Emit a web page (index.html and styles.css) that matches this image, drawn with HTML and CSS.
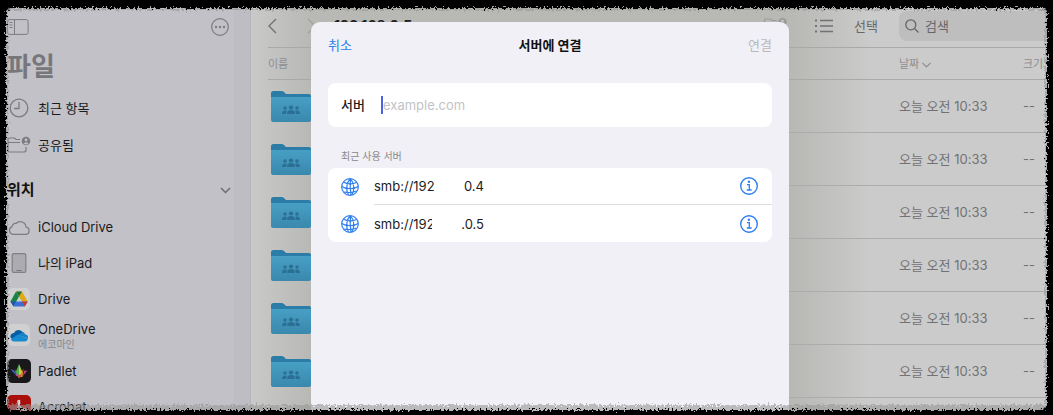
FILE: index.html
```html
<!DOCTYPE html>
<html lang="ko">
<head>
    <meta charset="UTF-8">
    <meta name="viewport" content="width=device-width, initial-scale=1.0">
    <title>서버에 연결</title>
    <link rel="stylesheet" href="styles.css">
</head>
<body>
    <svg class="defs" aria-hidden="true">
        <filter id="rough" x="-2%" y="-4%" width="104%" height="108%" color-interpolation-filters="sRGB">
            <feTurbulence type="fractalNoise" baseFrequency="0.5" numOctaves="3" seed="4" result="noise"/>
            <feDisplacementMap in="SourceGraphic" in2="noise" scale="9" xChannelSelector="R" yChannelSelector="G"/>
            <feGaussianBlur stdDeviation="0.4"/>
        </filter>
        <linearGradient id="folder-fill" x1="0" y1="0" x2="0" y2="1">
            <stop offset="0" stop-color="#479fc4"/>
            <stop offset="1" stop-color="#3a88ae"/>
        </linearGradient>
        <symbol id="folder" viewBox="0 0 40 31">
            <path d="M0 2.5Q0 0 2.5 0H10.5Q12 0 13 1L15 3H38Q40 3 40 5V12H0Z" fill="#2c7ca8"/>
            <path d="M0 6H40V29Q40 31 38 31H2Q0 31 0 29Z" fill="url(#folder-fill)"/>
            <g fill="#2c6f94">
                <circle cx="14" cy="17" r="1.7"/>
                <circle cx="20" cy="16.5" r="2.1"/>
                <circle cx="26" cy="17" r="1.7"/>
                <path d="M11 23q0-3.5 3-3.5 1.500 0 2 .8-1 1-1 2.700zM16 23q0-4 4-4t4 4zM29 23q0-3.500-3-3.500-1.500 0-2 .8 1 1 1 2.700z"/>
            </g>
        </symbol>
        <symbol id="globe" viewBox="0 0 18 18">
            <g fill="none" stroke="#2f7fee" stroke-width="1.200">
                <circle cx="9" cy="9" r="8.300"/>
                <path d="M9.500 .8C5.500 4 4.500 12 7.500 17M9.500 .8C13.500 5 13.500 12 11 17M9.500 .8C9 6 9 12 10 17.200M2.500 4C6 6.500 12 6.500 15.800 4.200M.8 8.500C5 11.500 13 11.500 17.200 8.500M2.800 14C7 14.800 12 14.500 15.500 13"/>
            </g>
            <g fill="#2f7fee">
                <circle cx="5.500" cy="10.500" r="1.100"/>
                <circle cx="12.700" cy="10.400" r="1.100"/>
                <circle cx="9.300" cy="5.900" r="1"/>
            </g>
        </symbol>
        <symbol id="info" viewBox="0 0 20 20">
            <circle cx="10" cy="10" r="8.300" fill="none" stroke="#2f7fee" stroke-width="1.400"/>
            <circle cx="9.900" cy="5.800" r="1.200" fill="#2f7fee"/>
            <path d="M8 8.700h2.300v5M7.700 14h5" fill="none" stroke="#2f7fee" stroke-width="1.300"/>
        </symbol>
        <symbol id="shared" viewBox="0 0 24 18">
            <g fill="none" stroke="currentColor" stroke-width="1.200">
                <path d="M13 3.500H9L7.500 2H2.500Q1 2 1 3.500V14Q1 16 3 16H17Q19 16 19 14V11M1 6.500H13"/>
            </g>
            <circle cx="19" cy="5" r="4.300" fill="currentColor"/>
            <circle cx="19" cy="3.900" r="1.400" fill="#c2c1c7"/>
            <path d="M16.500 7.700q2.500-3 5 0-2.500 1.600-5 0z" fill="#c2c1c7"/>
        </symbol>
    </svg>

    <div class="app">
        <!-- 사이드바 -->
        <aside class="sidebar">
            <div class="sidebar-tools">
                <button type="button" aria-label="사이드바">
                    <svg width="22" height="16" viewBox="0 0 22 16" fill="none" stroke="currentColor"><rect x=".6" y=".6" width="20.500" height="14.800" rx="2"/><path d="M7.500 1v14M2.500 3.500h3M2.500 6h3M2.500 8.500h3"/></svg>
                </button>
                <button type="button" aria-label="더 보기">
                    <svg width="18" height="18" viewBox="0 0 18 18"><circle cx="9" cy="9" r="8.300" fill="none" stroke="currentColor" stroke-width="1.200"/><g fill="currentColor"><circle cx="5" cy="9" r="1.200"/><circle cx="9" cy="9" r="1.200"/><circle cx="13" cy="9" r="1.200"/></g></svg>
                </button>
            </div>
            <h1>파일</h1>
            <ul class="nav recents">
                <li>
                    <svg class="icon" viewBox="0 0 24 24" fill="none" stroke="currentColor" stroke-width="1.300"><circle cx="12" cy="12" r="8.800"/><path d="M12 6v6.500H7"/></svg>
                    <span>최근 항목</span>
                </li>
                <li>
                    <svg class="icon"><use href="#shared"/></svg>
                    <span>공유됨</span>
                </li>
            </ul>
            <div class="section">
                <h2>위치</h2>
                <svg width="11" height="7" viewBox="0 0 11 7" fill="none" stroke="currentColor" stroke-width="1.500"><path d="M1 1l4.500 4.500L10 1"/></svg>
            </div>
            <ul class="nav">
                <li>
                    <svg class="icon" viewBox="0 0 24 24" fill="none" stroke="currentColor" stroke-width="1.200"><path d="M6 19.300A4 4 0 0 1 5 11.600 3.500 3.500 0 0 1 9 8.500 5.800 5.800 0 0 1 19 12 3.700 3.700 0 0 1 19 19.300Z"/></svg>
                    <span>iCloud Drive</span>
                </li>
                <li>
                    <svg class="icon" viewBox="0 0 24 24"><rect x="5.200" y="2.600" width="13.600" height="18.800" rx="1.500" fill="#acacb0" stroke="#808084" stroke-width="1.200"/><path d="M9.500 19.500h5" stroke="#77777b"/></svg>
                    <span>나의 iPad</span>
                </li>
                <li>
                    <svg class="icon" viewBox="0 0 24 24"><rect x="1" y="1" width="22" height="22" rx="5" fill="#d0d0d0"/><path d="M9 4.500L3.500 14.500 6.500 19.500 12 9.500Z" fill="#168447"/><path d="M9 4.500H15L20.700 14.500H14.800Z" fill="#dda916"/><path d="M6.500 19.500L9.300 14.500H20.700L17.800 19.500Z" fill="#3b6fd6"/><path d="M14.800 14.500H20.700L17.800 19.500Z" fill="#cc3b2f"/><path d="M3.500 14.500H9.300L6.500 19.500Z" fill="#2355b5"/><path d="M9 4.500H15L12 9.500Z" fill="#1b7240"/></svg>
                    <span>Drive</span>
                </li>
                <li>
                    <svg class="icon" viewBox="0 0 24 24"><rect x="1" y="1" width="22" height="22" rx="5" fill="#d0d0d0"/><path d="M7 10a5 5 0 0 1 9-.5l-5 5-7 1A3.500 3.500 0 0 1 7 10Z" fill="#075da3"/><path d="M11 12l5-3.300a4.500 4.500 0 0 1 2 2.500q3.500.5 3 4z" fill="#1682c5"/><path d="M4 16l7-4.500 10 4q-.5 3-3.500 3H7q-2.500 0-3-2.500z" fill="#168bd0"/></svg>
                    <span>OneDrive<small>에코마인</small></span>
                </li>
                <li>
                    <svg class="icon" viewBox="0 0 24 24"><rect width="24" height="24" rx="5" fill="#19191b"/><path d="M3.500 10l3.500 1.500 2 5z" fill="#3b6ed8"/><path d="M7.500 9.500l4 7.500H9z" fill="#8057c9"/><path d="M12 5L8.700 13 12 19Z" fill="#4fae45"/><path d="M12 5l3.300 8L12 19Z" fill="#c7cd3c"/><path d="M16.500 9.500L12.500 18h3z" fill="#dd8b2d"/><path d="M15.500 17.500l2-6 3 .5-1.500 1z" fill="#cf4190"/><path d="M9 15l3 4.500 3-4.500-3 1z" fill="#d24c43"/></svg>
                    <span>Padlet</span>
                </li>
                <li>
                    <svg class="icon" viewBox="0 0 24 24"><rect width="24" height="24" rx="5" fill="#a90f0b"/><path d="M12 5.500c-3 0 1 7 4.500 10 2 1.500 4-1 1-1.500-4-.5-9 1-11 3s1 3 2.500 0S14 5.500 12 5.500Z" fill="none" stroke="#e0d5d5" stroke-width="1.400"/></svg>
                    <span>Acrobat</span>
                </li>
            </ul>
        </aside>

        <!-- 파일 목록 -->
        <main class="browser">
            <div class="toolbar">
                <button type="button" aria-label="뒤로"><svg width="9" height="16" viewBox="0 0 9 16" fill="none" stroke="currentColor" stroke-width="1.400"><path d="M8 1L1 8l7 7"/></svg></button>
                <button type="button" class="forward" aria-label="앞으로"><svg width="9" height="16" viewBox="0 0 9 16" fill="none" stroke="currentColor" stroke-width="1.400"><path d="M1 1l7 7-7 7"/></svg></button>
                <strong>192.168.0.5</strong>
                <button type="button" class="new-folder" aria-label="공유 폴더"><svg width="25" height="18"><use href="#shared"/></svg></button>
                <button type="button" class="view-list" aria-label="목록 보기"><svg width="18" height="14" viewBox="0 0 18 14" fill="none" stroke="currentColor" stroke-width="1.300"><path d="M5 1.500h13M5 7h13M5 12.500h13"/><path d="M0 1.500h2M0 7h2M0 12.500h2" stroke-width="2"/></svg></button>
                <button type="button" class="select">선택</button>
                <label class="search">
                    <svg width="14" height="14" viewBox="0 0 14 14" fill="none" stroke="currentColor" stroke-width="1.300"><circle cx="5.800" cy="5.800" r="5"/><path d="M9.500 9.500L13.500 13.500"/></svg>
                    <input type="search" placeholder="검색" aria-label="검색">
                </label>
            </div>
            <table class="files">
                <thead>
                    <tr>
                        <th colspan="2">이름</th>
                        <th class="date">날짜 <svg width="9" height="6" viewBox="0 0 9 6" fill="none" stroke="currentColor" stroke-width="1.200"><path d="M.5.8l4 4 4-4"/></svg></th>
                        <th class="size">크기</th>
                    </tr>
                </thead>
                <tbody>
                    <tr><td class="thumb"><svg><use href="#folder"/></svg></td><td></td><td>오늘 오전 10:33</td><td>--</td></tr>
                    <tr><td class="thumb"><svg><use href="#folder"/></svg></td><td></td><td>오늘 오전 10:33</td><td>--</td></tr>
                    <tr><td class="thumb"><svg><use href="#folder"/></svg></td><td></td><td>오늘 오전 10:33</td><td>--</td></tr>
                    <tr><td class="thumb"><svg><use href="#folder"/></svg></td><td></td><td>오늘 오전 10:33</td><td>--</td></tr>
                    <tr><td class="thumb"><svg><use href="#folder"/></svg></td><td></td><td>오늘 오전 10:33</td><td>--</td></tr>
                    <tr><td class="thumb"><svg><use href="#folder"/></svg></td><td></td><td>오늘 오전 10:33</td><td>--</td></tr>
                </tbody>
            </table>
        </main>

        <!-- 서버 연결 창 -->
        <div class="dialog-layer">
            <form class="dialog">
                <header>
                    <button type="button">취소</button>
                    <h2>서버에 연결</h2>
                    <button type="submit" disabled>연결</button>
                </header>
                <div class="card field">
                    <label for="server">서버</label>
                    <span class="caret"></span>
                    <input type="text" id="server" placeholder="example.com">
                </div>
                <h3>최근 사용 서버</h3>
                <ul class="card servers">
                    <li>
                        <svg class="globe"><use href="#globe"/></svg>
                        <div class="server">
                            <span class="address"><span>smb://192</span><span>0.4</span></span>
                            <button type="button" aria-label="정보"><svg width="20" height="20"><use href="#info"/></svg></button>
                        </div>
                    </li>
                    <li>
                        <svg class="globe"><use href="#globe"/></svg>
                        <div class="server">
                            <span class="address"><span class="cut">smb://192</span><span>.0.5</span></span>
                            <button type="button" aria-label="정보"><svg width="20" height="20"><use href="#info"/></svg></button>
                        </div>
                    </li>
                </ul>
            </form>
        </div>

        <div class="edge grain"></div>
        <div class="edge"></div>
    </div>
</body>
</html>
```
FILE: styles.css
```css
* {
    box-sizing: border-box;
}
body {
    margin: 0;
    background: #000;
    color: #1b1b1e;
    font: 13px/18px Inter, "Noto Sans CJK KR", sans-serif;
}
h1, h2, h3, ul {
    margin: 0;
    padding: 0;
    list-style: none;
}
button, input {
    margin: 0;
    padding: 0;
    border: 0;
    background: none;
    color: inherit;
    font: inherit;
    outline: none;
}
svg {
    display: block;
    flex: none;
}
.defs {
    position: absolute;
    width: 0;
    height: 0;
}
.app {
    position: relative;
    display: flex;
    height: 100vh;
    overflow: hidden;
}

/* sidebar */
.sidebar {
    flex: none;
    width: 251px;
    padding: 8px 0 0 7px;
    background: linear-gradient(to right, #c2c1c7 233px, #bebdc3 234px);
    border-right: 1px solid #b5b5ba;
}
.sidebar-tools {
    display: flex;
    align-items: center;
    justify-content: space-between;
    height: 39px;
    padding: 0 21px 2px 0;
    color: #7c7c80;
}
.sidebar h1 {
    height: 42px;
    font-size: 26px;
    line-height: 40px;
    color: #77777b;
}
.nav li {
    display: flex;
    align-items: center;
    gap: 7px;
    height: 36px;
}
.nav.recents li {
    height: 37px;
}
.nav .icon {
    width: 24px;
    height: 24px;
    color: #7c7c80;
}
.nav small {
    display: block;
    font-size: 10px;
    line-height: 12px;
    color: #87878b;
}
.section {
    display: flex;
    align-items: center;
    justify-content: space-between;
    height: 46px;
    padding: 8px 19px 0 0;
    color: #6c6c70;
}
.section h2 {
    font-size: 15px;
    color: #111;
}

/* file browser */
.browser {
    flex: 1;
    min-width: 0;
    padding: 8px 0 0 17px;
    background: linear-gradient(to right, #c9c9c9, #b8b9b5 60px, #b8b9b5 540px, #cbcbcb 620px);
    color: #727275;
}
.toolbar {
    display: flex;
    align-items: center;
    height: 40px;
    padding-bottom: 3px;
    border-bottom: 1px solid #a9aaa8;
}
.toolbar .forward {
    margin: 0 18px 0 30px;
    color: #a0a19f;
}
.toolbar strong {
    font-size: 14px;
    color: #222;
}
.toolbar .new-folder {
    margin-left: auto;
    color: #9b9c9a;
}
.toolbar .view-list {
    margin: 0 21px 0 27px;
}
.toolbar .select {
    margin-right: 21px;
    color: #68686b;
}
.search {
    display: flex;
    align-items: center;
    gap: 6px;
    width: 154px;
    height: 30px;
    padding-left: 6px;
    border-radius: 8px;
    background: #bebebf;
    color: #66666a;
}
.search input {
    width: 100px;
}
.search input::placeholder {
    color: #66666a;
    opacity: 1;
}
.files {
    width: 100%;
    table-layout: fixed;
    border-collapse: separate;
    border-spacing: 0;
}
.files th {
    height: 32px;
    padding: 0;
    border-bottom: 1px solid #a9aaa8;
    font-size: 11px;
    font-weight: 400;
    text-align: left;
    white-space: nowrap;
    color: #8e8e90;
}
.files th svg {
    display: inline-block;
}
.files .date {
    width: 124px;
}
.files .size {
    width: 30px;
}
.files td {
    height: 53px;
    padding: 0;
    border-bottom: 1px solid #abacab;
}
.files .thumb {
    padding-left: 3px;
    border-bottom: 0;
}
.thumb svg {
    width: 40px;
    height: 31px;
}

/* connect dialog */
.dialog-layer {
    position: absolute;
    inset: 22px 0 0 47px;
    display: flex;
    justify-content: center;
}
.dialog {
    width: 478px;
    padding: 0 17px;
    border-radius: 9px 9px 0 0;
    background: #f0f0f6;
}
.dialog header {
    display: flex;
    align-items: center;
    justify-content: space-between;
    height: 46px;
    margin-bottom: 15px;
    color: #2f7fee;
}
.dialog header h2 {
    font-size: 13px;
    color: #111;
}
.dialog header button:disabled {
    color: #b9b9be;
}
.card {
    border-radius: 8px;
    background: #fff;
}
.field {
    display: flex;
    align-items: center;
    height: 44px;
    padding: 0 13px;
}
.field label {
    width: 40px;
    font-weight: 500;
}
.field .caret {
    width: 2px;
    height: 18px;
    background: #4a63e0;
}
.field input {
    flex: 1;
}
.field input::placeholder {
    color: #c3c3c7;
    opacity: 1;
}
.dialog h3 {
    padding: 20px 13px 3px;
    font-size: 10px;
    font-weight: 400;
    color: #88888d;
}
.servers li {
    display: flex;
    align-items: center;
    gap: 15px;
    padding-left: 13px;
}
.servers .globe {
    width: 18px;
    height: 18px;
}
.server {
    flex: 1;
    display: flex;
    align-items: center;
    justify-content: space-between;
    height: 37px;
    padding-right: 13px;
}
.servers li:first-child .server {
    border-bottom: 1px solid #dedee2;
}
.address {
    display: flex;
    justify-content: space-between;
    width: 110px;
}
.address .cut {
    width: 58px;
    overflow: hidden;
}

/* torn black border */
.edge {
    position: absolute;
    inset: -10px;
    border: solid #000;
    border-width: 18px 16px 15px;
    border-radius: 22px;
    filter: url(#rough);
    pointer-events: none;
}
.edge.grain {
    border-color: rgba(150, 150, 150, 0.6);
    border-width: 20px 18px 20px;
}
```
